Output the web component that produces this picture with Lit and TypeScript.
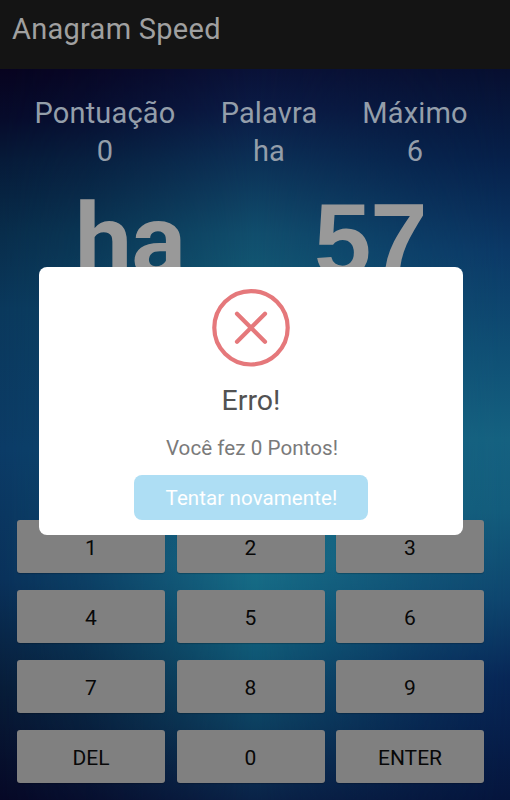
import { LitElement, html, css } from "lit";
import { customElement } from "lit/decorators.js";

const STATS = [
  { label: "Pontuação", value: "0" },
  { label: "Palavra", value: "ha" },
  { label: "Máximo", value: "6" },
];

const KEYS = ["1", "2", "3", "4", "5", "6", "7", "8", "9", "DEL", "0", "ENTER"];

@customElement("error-dialog")
class ErrorDialog extends LitElement {
  static styles = css`
    :host {
      display: flex;
      flex-direction: column;
      align-items: center;
      box-sizing: border-box;
      width: 424px;
      height: 268px;
      padding-top: 22px;
      border-radius: 8px;
      background: #fff;
    }
    .icon {
      display: block;
      width: 78px;
      height: 78px;
      fill: none;
      stroke: #e5787b;
    }
    .title {
      margin: 17px 0 0;
      font-size: 28.5px;
      font-weight: 400;
      line-height: 34px;
      color: #525252;
    }
    .message {
      margin: 17px 0 0;
      padding-left: 2px;
      font-size: 20.6px;
      letter-spacing: 0.05px;
      line-height: 26px;
      color: #7a7a7a;
    }
    .retry {
      width: 234px;
      height: 45px;
      margin-top: 14px;
      padding: 2px 0 0 1px;
      border: 0;
      border-radius: 8px;
      background: #aedef4;
      color: #fff;
      font: 400 20.5px Roboto, sans-serif;
      letter-spacing: 0.1px;
    }
  `;
  render() {
    return html`
      <svg class="icon" viewBox="0 0 78 78">
        <circle cx="39" cy="38.8" r="36.7" stroke-width="4.2" />
        <path d="M25 24.8 53 52.8M53 24.8 25 52.8" stroke-width="4.2" stroke-linecap="round" />
      </svg>
      <h2 class="title">Erro!</h2>
      <p class="message">Você fez 0 Pontos!</p>
      <button class="retry">Tentar novamente!</button>
    `;
  }
}

@customElement("app-root")
class AppRoot extends LitElement {
  static styles = css`
    :host {
      display: flex;
      flex-direction: column;
      position: relative;
      width: 510px;
      height: 800px;
      overflow: hidden;
      font-family: Roboto, sans-serif;
    }
    .bar {
      flex: none;
      box-sizing: border-box;
      height: 69px;
      padding: 11px 12px 0;
      background: #141414;
      color: #a0a0a0;
      font-size: 29px;
      letter-spacing: 0.27px;
      line-height: 36px;
    }
    .game {
      flex: 1;
      display: flex;
      flex-direction: column;
      position: relative;
      isolation: isolate;
      background: linear-gradient(
        #0a1238,
        #0b1b45 40px,
        #0c3056 90px,
        #114e6d 165px,
        #125672 200px,
        #145f7c 330px,
        #18708a 490px,
        #105a77 580px,
        #0d4262 650px,
        #0a2348
      );
    }
    .game::before,
    .game::after {
      content: "";
      position: absolute;
      inset: 0;
      z-index: -1;
    }
    .game::before {
      background: linear-gradient(
        #07031f,
        #060b2b 50px,
        #061a38 90px,
        #082d4b 165px,
        #0a385c 240px,
        #0b3b66 380px,
        #09315a 510px,
        #071c38 620px,
        #060826
      );
      mask-image: linear-gradient(90deg, #000, rgba(0, 0, 0, 0.75) 17%, transparent 50%);
    }
    .game::after {
      background: linear-gradient(
        #070f30,
        #06204a 90px,
        #0b3866 180px,
        #0f4e74 280px,
        #156180 370px,
        #135c7c 440px,
        #0e456e 530px,
        #072656 610px,
        #05153d
      );
      mask-image: linear-gradient(270deg, #000, rgba(0, 0, 0, 0.75) 17%, transparent 50%);
    }
    .stats {
      display: grid;
      grid-template-columns: 142px 98px 106px;
      column-gap: 44px;
      padding: 25px 0 0 34px;
      font-size: 29px;
      letter-spacing: 0.15px;
      line-height: 38px;
      text-align: center;
      white-space: nowrap;
      color: #949eaa;
    }
    .stat {
      display: flex;
      flex-direction: column;
      align-items: center;
    }
    .round {
      display: grid;
      grid-template-columns: 239px auto;
      justify-content: start;
      align-items: baseline;
      padding: 5px 0 0 75px;
      color: #999;
      font-size: 103px;
      font-weight: 700;
      line-height: 132px;
    }
    .word {
      font-size: 102px;
      letter-spacing: -1px;
    }
    .time {
      font-family: "Liberation Sans", sans-serif;
      letter-spacing: -1px;
    }
    .keypad {
      display: grid;
      grid-template-columns: repeat(3, 148px);
      grid-auto-rows: 53px;
      gap: 17px 11.5px;
      margin: auto 0 17px 17px;
    }
    .key {
      padding: 2px 0 0;
      border: 0;
      border-radius: 3px;
      background: #808080;
      box-shadow: 0 1px 1px rgba(0, 0, 0, 0.2);
      color: #080808;
      font: 400 21px Roboto, sans-serif;
    }
    .dialog {
      position: absolute;
      left: 39px;
      top: 266.5px;
    }
  `;
  render() {
    return html`
      <header class="bar">Anagram Speed</header>
      <main class="game">
        <section class="stats">
          ${STATS.map((s) => html`<div class="stat"><span>${s.label}</span><span>${s.value}</span></div>`)}
        </section>
        <section class="round"><span class="word">ha</span><span class="time">57</span></section>
        <section class="keypad">${KEYS.map((k) => html`<button class="key">${k}</button>`)}</section>
      </main>
      <error-dialog class="dialog"></error-dialog>
    `;
  }
}
